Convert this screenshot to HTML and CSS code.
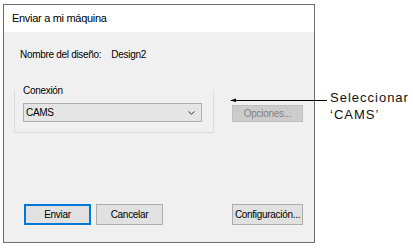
FILE: index.html
```html
<!DOCTYPE html>
<html lang="es">
<head>
<meta charset="utf-8">
<title>Enviar a mi máquina</title>
<link rel="stylesheet" href="styles.css">
</head>
<body>
<div class="page">
  <div class="dialog">
    <div class="titlebar">Enviar a mi máquina</div>
    <div class="content">
      <div class="name-row">
        <span class="name-label">Nombre del diseño:</span>
        <span class="name-value">Design2</span>
      </div>
      <div class="conn-row">
        <div class="group">
          <div class="group-label">Conexión</div>
          <div class="combo">
            <span>CAMS</span>
            <svg class="chev" width="7" height="4" viewBox="0 0 7 4"><polyline points="0.5,0.5 3.5,3.2 6.5,0.5" fill="none" stroke="#333" stroke-width="1"/></svg>
          </div>
        </div>
        <div class="btn btn-disabled btn-options">Opciones...</div>
      </div>
      <div class="buttons">
        <div class="btn btn-default">Enviar</div>
        <div class="btn">Cancelar</div>
        <div class="btn btn-config">Configuración...</div>
      </div>
    </div>
  </div>
  <div class="callout">Seleccionar<br>‘CAMS’</div>
  <svg class="arrow" width="100" height="8" viewBox="0 0 100 8">
    <line x1="2" y1="4.5" x2="98" y2="4.5" stroke="#000" stroke-width="1.2"/>
    <polygon points="1,4.5 7,2.5 7,6" fill="#000"/>
  </svg>
</div>
</body>
</html>
```
FILE: styles.css
```css
html, body {
  margin: 0;
  padding: 0;
  background: #fff;
}
.page {
  position: relative;
  display: flex;
  align-items: flex-start;
  width: 413px;
  height: 248px;
}
.dialog {
  margin-left: 3px;
  margin-top: 4px;
  width: 312px;
  height: 239px;
  box-sizing: border-box;
  border: 1px solid #6e6e6e;
  display: flex;
  flex-direction: column;
  font-family: "Liberation Sans", Arial, sans-serif;
  color: #000;
}
.titlebar {
  height: 27px;
  background: #fff;
  font-size: 11px;
  letter-spacing: -0.3px;
  line-height: 27px;
  padding-left: 8px;
}
.content {
  flex: 1;
  background: #f0f0f0;
  display: flex;
  flex-direction: column;
  padding: 16px 0 17px 0;
  font-size: 10px;
  letter-spacing: -0.3px;
}
.name-row {
  display: flex;
  line-height: 14px;
  padding-left: 16px;
}
.name-value {
  margin-left: 10px;
}
.conn-row {
  display: flex;
  align-items: flex-start;
  margin-top: 28px;
  margin-left: 10px;
}
.group {
  width: 200px;
  box-sizing: border-box;
  border: 1px solid #dcdcdc;
  border-top: none;
  padding: 0 0 10px 8px;
}
.group-label {
  margin-top: -5px;
  line-height: 12px;
  padding-left: 0;
}
.combo {
  margin-top: 6px;
  width: 179px;
  height: 19px;
  box-sizing: border-box;
  border: 1px solid #adadad;
  background: #e5e5e5;
  display: flex;
  align-items: center;
  justify-content: space-between;
  padding: 0 6px 0 2px;
}
.chev {
  display: block;
}
.btn {
  width: 67px;
  height: 21px;
  box-sizing: border-box;
  border: 1px solid #adadad;
  background: #e1e1e1;
  display: flex;
  align-items: center;
  justify-content: center;
  white-space: nowrap;
  overflow: hidden;
}
.btn-options {
  margin-top: 15px;
  margin-left: 18px;
  width: 71px;
  height: 17px;
}
.btn-disabled {
  background: #cccccc;
  border-color: #bfbfbf;
  color: #838383;
}
.buttons {
  margin-top: auto;
  display: flex;
  padding-left: 20px;
  gap: 5px;
}
.btn-default {
  border: 2px solid #0078d7;
}
.btn-config {
  margin-left: auto;
  margin-right: 11px;
  width: 71px;
}
.callout {
  margin-left: 15px;
  margin-top: 89px;
  font-family: "Liberation Sans", Arial, sans-serif;
  font-size: 13px;
  line-height: 17px;
  letter-spacing: 1px;
  color: #111;
}
.arrow {
  position: absolute;
  left: 229px;
  top: 96px;
}
```
